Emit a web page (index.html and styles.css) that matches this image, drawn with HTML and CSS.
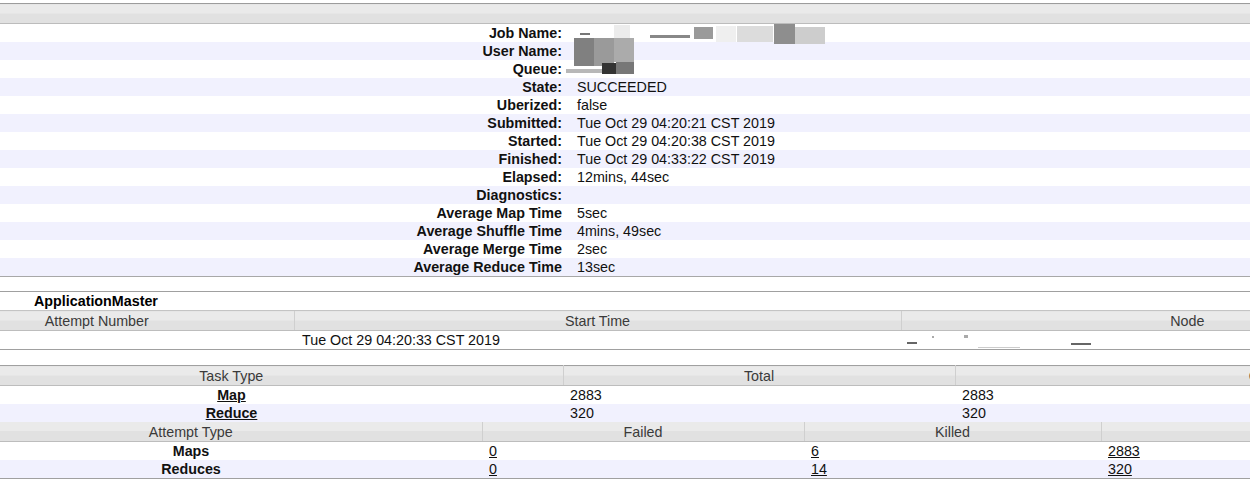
FILE: index.html
```html
<!DOCTYPE html>
<html>
<head>
<meta charset="utf-8">
<title>Job Overview</title>
<link rel="stylesheet" href="styles.css">
</head>
<body>
<div class="page">
  <table class="info">
    <colgroup><col class="c-label"><col></colgroup>
    <thead><tr><th class="hdr" colspan="2"></th></tr></thead>
    <tbody>
      <tr><th>Job Name:</th><td class="redact-cell">
        <span class="rd r1"></span><span class="rd r2"></span><span class="rd r3"></span><span class="rd r4"></span><span class="rd r5"></span><span class="rd r6"></span><span class="rd r7"></span><span class="rd r8"></span>
      </td></tr>
      <tr><th>User Name:</th><td class="redact-cell">
        <span class="rd u1"></span><span class="rd u2"></span><span class="rd u3"></span>
      </td></tr>
      <tr><th>Queue:</th><td class="redact-cell">
        <span class="rd q1"></span><span class="rd q2"></span><span class="rd q3"></span>
      </td></tr>
      <tr><th>State:</th><td>SUCCEEDED</td></tr>
      <tr><th>Uberized:</th><td>false</td></tr>
      <tr><th>Submitted:</th><td>Tue Oct 29 04:20:21 CST 2019</td></tr>
      <tr><th>Started:</th><td>Tue Oct 29 04:20:38 CST 2019</td></tr>
      <tr><th>Finished:</th><td>Tue Oct 29 04:33:22 CST 2019</td></tr>
      <tr><th>Elapsed:</th><td>12mins, 44sec</td></tr>
      <tr><th>Diagnostics:</th><td></td></tr>
      <tr><th>Average Map Time</th><td>5sec</td></tr>
      <tr><th>Average Shuffle Time</th><td>4mins, 49sec</td></tr>
      <tr><th>Average Merge Time</th><td>2sec</td></tr>
      <tr><th>Average Reduce Time</th><td>13sec</td></tr>
    </tbody>
  </table>

  <table class="grid am">
    <colgroup><col class="am1"><col class="am2"><col class="am3"></colgroup>
    <tbody>
      <tr class="caption"><th colspan="3">ApplicationMaster</th></tr>
      <tr class="head"><th>Attempt Number</th><th>Start Time</th><th>Node</th></tr>
      <tr class="odd"><td></td><td>Tue Oct 29 04:20:33 CST 2019</td><td class="redact-cell">
        <span class="rd n1"></span><span class="rd n2"></span><span class="rd n3"></span><span class="rd n4"></span><span class="rd n5"></span>
      </td></tr>
    </tbody>
  </table>

  <table class="grid tasks">
    <colgroup><col class="t1"><col class="t2"><col class="t3"></colgroup>
    <tbody>
      <tr class="head"><th>Task Type</th><th>Total</th><th>Complete</th></tr>
      <tr class="odd"><th class="bold-link"><a href="#">Map</a></th><td>2883</td><td>2883</td></tr>
      <tr class="even"><th class="bold-link"><a href="#">Reduce</a></th><td>320</td><td>320</td></tr>
    </tbody>
  </table>

  <table class="grid attempts">
    <colgroup><col class="a1"><col class="a2"><col class="a3"><col class="a4"></colgroup>
    <tbody>
      <tr class="head"><th>Attempt Type</th><th>Failed</th><th>Killed</th><th>Successful</th></tr>
      <tr class="odd"><th class="bold">Maps</th><td><a href="#">0</a></td><td><a href="#">6</a></td><td><a href="#">2883</a></td></tr>
      <tr class="even"><th class="bold">Reduces</th><td><a href="#">0</a></td><td><a href="#">14</a></td><td><a href="#">320</a></td></tr>
    </tbody>
  </table>
</div>
</body>
</html>
```

FILE: styles.css
```css
html, body {
  margin: 0;
  padding: 0;
  background: #fff;
  overflow: hidden;
}

body {
  font-family: "Liberation Sans", Arial, Helvetica, sans-serif;
  font-size: 14.3px;
  color: #111;
}

.page {
  margin-left: -100px;
  width: 2000px;
  padding-top: 3px;
}

table {
  border-collapse: collapse;
  table-layout: fixed;
}

th, td {
  padding: 0;
  height: 18px;
  line-height: 18px;
  white-space: nowrap;
  overflow: hidden;
}

a {
  color: #111;
  text-decoration: underline;
}

/* ---------- info table ---------- */
.info {
  width: 2000px;
  border-top: 1px solid #9c9c9c;
  border-bottom: 1px solid #a8a8a8;
}

.info .c-label {
  width: 666px;
}

.info .hdr {
  height: 19px;
  background: linear-gradient(#eaeaea 0, #eaeaea 50%, #e1e1e1 50%, #e1e1e1 100%);
  border-bottom: 1px solid #bcbcbc;
}

.info tbody th {
  text-align: right;
  font-weight: bold;
  padding-right: 4px;
}

.info tbody td {
  padding-left: 11px;
  text-align: left;
}

.info tbody tr:nth-child(even) {
  background: #f1f1fe;
}

/* ---------- grid tables ---------- */
.grid {
  border-top: 1px solid #a0a0a0;
}

.grid.am {
  width: 1573px;
  margin-top: 14px;
  border-bottom: 1px solid #a0a0a0;
}

.am1 { width: 394px; }
.am2 { width: 607px; }
.am3 { width: 572px; }

.grid.tasks {
  width: 1703px;
  margin-top: 15px;
}

.t1 { width: 663px; }
.t2 { width: 392px; }
.t3 { width: 648px; }

.grid.attempts {
  width: 2000px;
  border-top: 0;
  border-bottom: 1px solid #a0a0a0;
}

.a1 { width: 582px; }
.a2 { width: 322px; }
.a3 { width: 297px; }
.a4 { width: 799px; }

.caption th {
  text-align: left;
  font-weight: bold;
  padding-left: 134px;
  background: #fff;
  color: #000;
}

.head th {
  height: 19px;
  font-weight: normal;
  color: #3a3a3a;
  text-align: center;
  background: linear-gradient(#eaeaea 0, #eaeaea 50%, #e1e1e1 50%, #e1e1e1 100%);
  border-top: 1px solid #c4c4c4;
  border-bottom: 1px solid #bdbdbd;
}

.head th + th {
  border-left: 1px solid #cfcfcf;
}

.grid.tasks .head th {
  border-top: 0;
}

.grid.attempts .head th {
  border-top: 0;
}

.grid td {
  text-align: left;
  padding-left: 7px;
}

.grid.am td {
  padding-left: 8px;
}

.grid .odd {
  background: #fff;
}

.grid .even {
  background: #f1f1fe;
}

.bold-link, .bold {
  font-weight: bold;
  text-align: center;
}

.bold-link a {
  color: #111;
}

/* ---------- redaction blocks ---------- */
.redact-cell {
  position: relative;
  overflow: visible;
}

.rd {
  position: absolute;
  display: block;
  filter: blur(0.6px);
}

/* Job Name */
.r1 { left: 14px; top: 9px; width: 10px; height: 2px; background: #777; }
.r2 { left: 48px; top: 1px; width: 16px; height: 19px; background: #ececec; }
.r3 { left: 84px; top: 11px; width: 40px; height: 3px; background: #888; }
.r4 { left: 128px; top: 3px; width: 19px; height: 12px; background: #9a9a9a; }
.r5 { left: 150px; top: 2px; width: 20px; height: 16px; background: #efefef; }
.r6 { left: 171px; top: 2px; width: 36px; height: 16px; background: #dcdcdc; }
.r7 { left: 208px; top: 0; width: 21px; height: 20px; background: #8e8e8e; }
.r8 { left: 229px; top: 3px; width: 30px; height: 17px; background: #cdcdcd; }

/* User Name */
.u1 { left: 8px; top: -4px; width: 20px; height: 28px; background: #808080; }
.u2 { left: 28px; top: -4px; width: 20px; height: 28px; background: #9a9a9a; }
.u3 { left: 48px; top: -4px; width: 20px; height: 24px; background: #ababab; }

/* Queue */
.q1 { left: 0; top: 9px; width: 36px; height: 4px; background: #b8b8b8; }
.q2 { left: 36px; top: 3px; width: 14px; height: 11px; background: #333; }
.q3 { left: 50px; top: 2px; width: 18px; height: 12px; background: #777; }

/* Node */
.n1 { left: 6px; top: 11px; width: 10px; height: 2px; background: #666; }
.n2 { left: 31px; top: 5px; width: 2px; height: 2px; background: #aaa; }
.n3 { left: 63px; top: 4px; width: 4px; height: 3px; background: #aaa; }
.n4 { left: 77px; top: 16px; width: 42px; height: 1px; background: #ccc; }
.n5 { left: 170px; top: 12px; width: 20px; height: 2px; background: #666; }
```
